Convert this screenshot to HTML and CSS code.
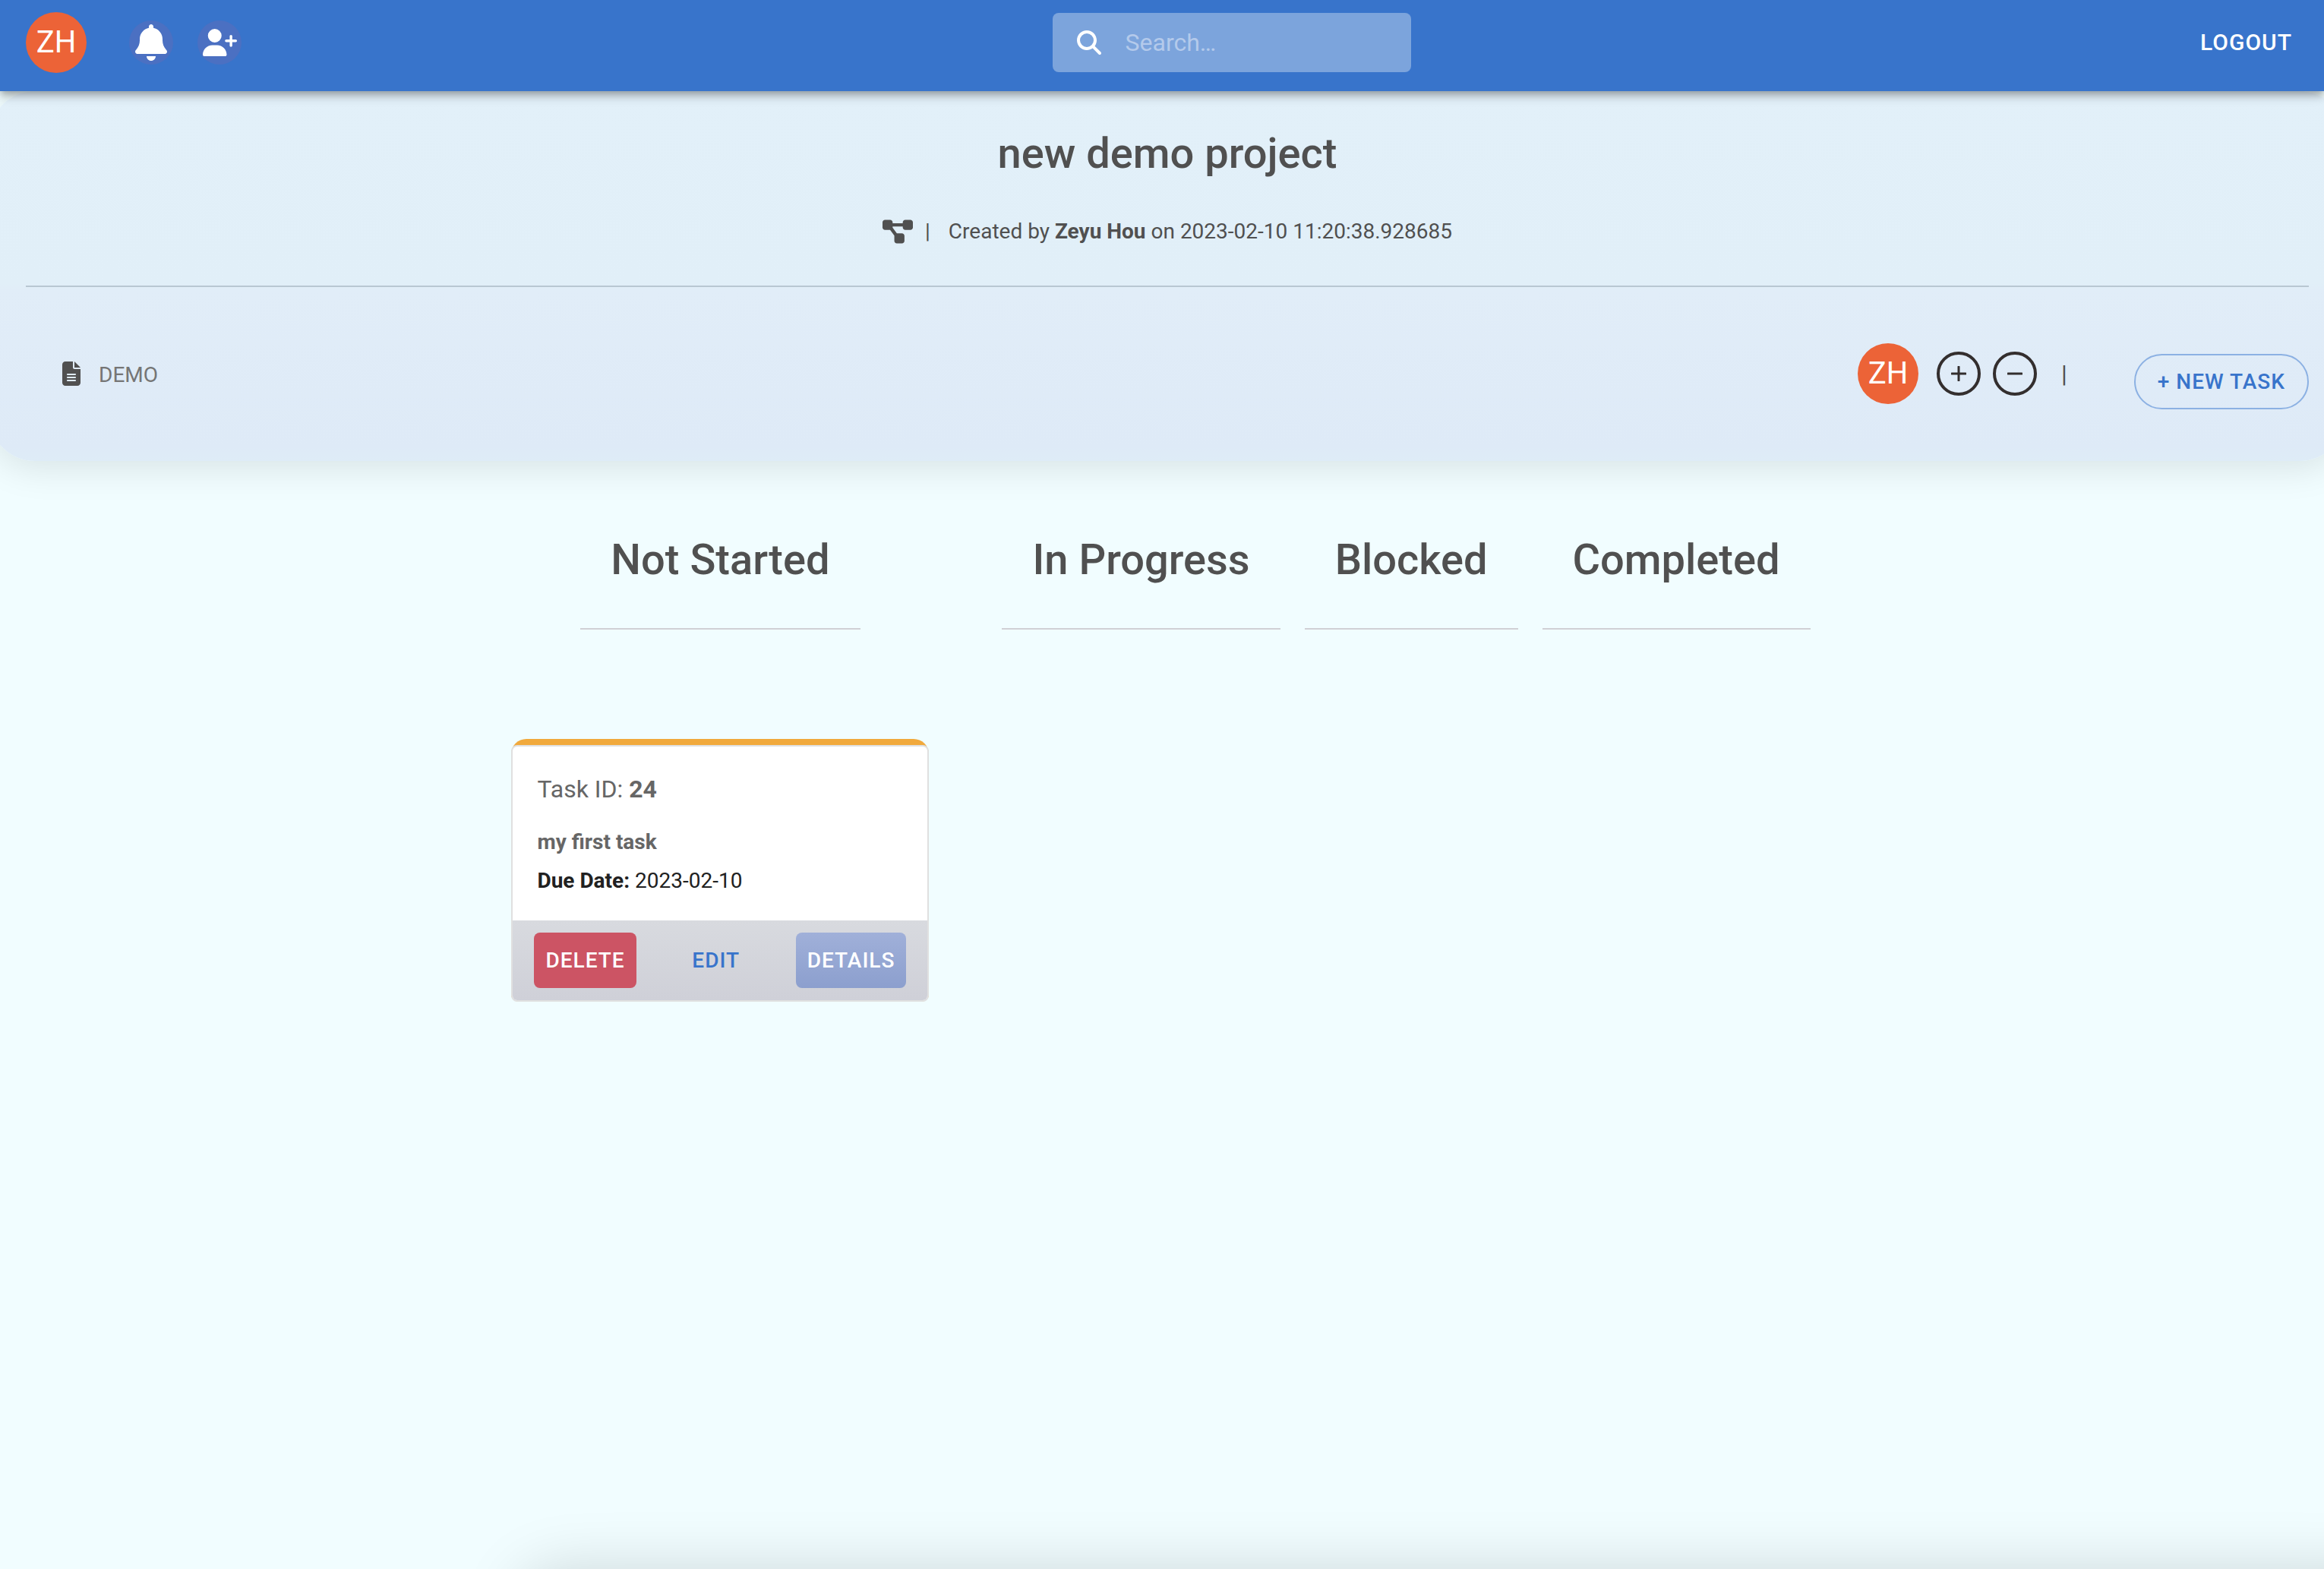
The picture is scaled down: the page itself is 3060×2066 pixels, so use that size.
FILE: index.html
```html
<!DOCTYPE html>
<html lang="en">
<head>
<meta charset="utf-8">
<meta name="viewport" content="width=device-width, initial-scale=1">
<title>new demo project</title>
<link rel="stylesheet" href="styles.css">
</head>
<body>
<div class="page">
  <header class="topbar">
    <div class="topbar-start">
      <span class="avatar">ZH</span>
      <button class="icon-button" type="button" aria-label="Notifications">
        <svg class="icon-bell" viewBox="0 0 448 512" aria-hidden="true"><path d="M224 0c-17.7 0-32 14.3-32 32V51.200C119 66 64 130.600 64 208v18.800c0 47-17.300 92.400-48.500 127.600l-7.400 8.300c-8.400 9.400-10.400 22.900-5.300 34.400S19.400 416 32 416H416c12.600 0 24-7.400 29.200-18.900s3.100-25-5.300-34.400l-7.400-8.300C401.300 319.200 384 273.900 384 226.800V208c0-77.400-55-142-128-156.800V32c0-17.700-14.300-32-32-32zm45.300 493.300c12-12 18.700-28.300 18.700-45.300H224 160c0 17 6.700 33.300 18.700 45.300s28.300 18.700 45.300 18.700s33.300-6.700 45.300-18.700z"/></svg>
      </button>
      <button class="icon-button" type="button" aria-label="Add user">
        <svg class="icon-user" viewBox="0 0 640 512" aria-hidden="true"><path d="M96 128a128 128 0 1 1 256 0A128 128 0 1 1 96 128zM0 482.300C0 383.800 79.800 304 178.300 304h91.400C368.200 304 448 383.800 448 482.300c0 16.400-13.300 29.700-29.700 29.700H29.700C13.300 512 0 498.700 0 482.300zM504 312V248H440c-13.300 0-24-10.700-24-24s10.700-24 24-24h64V136c0-13.300 10.700-24 24-24s24 10.700 24 24v64h64c13.300 0 24 10.700 24 24s-10.700 24-24 24H552v64c0 13.300-10.700 24-24 24s-24-10.700-24-24z"/></svg>
      </button>
    </div>
    <label class="search">
      <svg class="icon-search" viewBox="0 0 512 512" aria-hidden="true"><path d="M416 208c0 45.900-14.900 88.300-40 122.700L502.600 457.400c12.500 12.500 12.500 32.800 0 45.300s-32.800 12.500-45.300 0L330.700 376c-34.400 25.200-76.800 40-122.700 40C93.100 416 0 322.900 0 208S93.100 0 208 0S416 93.100 416 208zM208 352a144 144 0 1 0 0-288 144 144 0 1 0 0 288z"/></svg>
      <input class="search-input" type="text" placeholder="Search…" aria-label="Search">
    </label>
    <div class="topbar-end">
      <button class="button logout" type="button">LOGOUT</button>
    </div>
  </header>

  <section class="project">
    <h1 class="heading">new demo project</h1>
    <p class="created">
      <svg class="icon-project" viewBox="0 0 576 512" aria-hidden="true"><path d="M0 80C0 53.500 21.500 32 48 32h96c26.500 0 48 21.500 48 48V96H384V80c0-26.500 21.500-48 48-48h96c26.500 0 48 21.500 48 48v96c0 26.500-21.500 48-48 48H432c-26.500 0-48-21.500-48-48V160H192v16c0 1.700-.1 3.400-.3 5L272 288h96c26.500 0 48 21.500 48 48v96c0 26.500-21.500 48-48 48H272c-26.500 0-48-21.500-48-48V336c0-1.700 .1-3.400 .3-5L144 224H48c-26.500 0-48-21.500-48-48V80z"/></svg>
      <span class="created-bar">|</span>
      <span>Created by <strong>Zeyu Hou</strong> on 2023-02-10 11:20:38.928685</span>
    </p>
    <hr class="divider">
    <div class="project-row">
      <div class="project-tag">
        <svg class="icon-file" viewBox="0 0 384 512" aria-hidden="true"><path d="M64 0C28.700 0 0 28.700 0 64V448c0 35.300 28.700 64 64 64H320c35.300 0 64-28.700 64-64V160H256c-17.700 0-32-14.300-32-32V0H64zM256 0V128H384L256 0zM112 256H272c8.800 0 16 7.200 16 16s-7.200 16-16 16H112c-8.800 0-16-7.200-16-16s7.200-16 16-16zm0 64H272c8.800 0 16 7.200 16 16s-7.200 16-16 16H112c-8.800 0-16-7.200-16-16s7.200-16 16-16zm0 64H272c8.800 0 16 7.200 16 16s-7.200 16-16 16H112c-8.800 0-16-7.200-16-16s7.200-16 16-16z"/></svg>
        <span>DEMO</span>
      </div>
      <div class="members">
        <span class="avatar members-avatar">ZH</span>
        <button class="round-button" type="button" aria-label="Add member"><svg class="icon-sign" viewBox="0 0 20 20" aria-hidden="true"><path d="M1 10H19M10 1V19"/></svg></button>
        <button class="round-button" type="button" aria-label="Remove member"><svg class="icon-sign" viewBox="0 0 20 20" aria-hidden="true"><path d="M1 10H19"/></svg></button>
        <span class="members-bar">|</span>
        <button class="button new-task" type="button">+ NEW TASK</button>
      </div>
    </div>
  </section>

  <main class="board">
    <section class="column column-filled">
      <h2 class="heading column-title">Not Started</h2>
      <article class="card">
        <div class="card-inner">
          <div class="card-body">
            <p class="card-id">Task ID: <strong>24</strong></p>
            <p class="card-name">my first task</p>
            <p class="card-due"><strong>Due Date:</strong> 2023-02-10</p>
          </div>
          <div class="card-actions">
            <button class="button delete" type="button">DELETE</button>
            <button class="button edit" type="button">EDIT</button>
            <button class="button details" type="button">DETAILS</button>
          </div>
        </div>
      </article>
    </section>
    <section class="column"><h2 class="heading column-title">In Progress</h2></section>
    <section class="column"><h2 class="heading column-title">Blocked</h2></section>
    <section class="column"><h2 class="heading column-title">Completed</h2></section>
  </main>
</div>
</body>
</html>
```
FILE: styles.css
```css
* {
  box-sizing: border-box;
}

body {
  margin: 0;
  background: #f1fdff;
  color: #505050;
  font-family: Roboto, "Liberation Sans", sans-serif;
  font-size: 28px;
  line-height: 40px;
}

p,
h1,
h2 {
  margin: 0;
}

svg {
  display: block;
  fill: currentColor;
}

.page {
  position: relative;
  min-height: 100vh;
  overflow: hidden;
}

/* Shadow of the drawer parked under the lower edge of the window */
.page::after {
  content: "";
  position: absolute;
  top: 100%;
  left: 680px;
  right: -100px;
  height: 120px;
  border-radius: 60px;
  box-shadow: 0 0 80px rgba(0, 0, 0, 0.15);
}

.heading {
  font-size: 56px;
  font-weight: 500;
  line-height: 64px;
}

.button {
  border: 0;
  border-radius: 8px;
  padding: 0 15px;
  height: 73px;
  background: none;
  color: #fff;
  font: inherit;
  font-weight: 500;
  letter-spacing: 1px;
  white-space: nowrap;
}

.avatar {
  display: flex;
  align-items: center;
  justify-content: center;
  width: 80px;
  height: 80px;
  border-radius: 50%;
  background: #ec6337;
  color: #fff;
  font-size: 40px;
}

/* Top bar */
.topbar {
  position: relative;
  z-index: 1;
  display: grid;
  grid-template-columns: 1fr 472px 1fr;
  column-gap: 24px;
  align-items: center;
  height: 120px;
  padding: 0 27px 8px 34px;
  background: #3874cb;
  box-shadow: 0 4px 8px -2px rgba(0, 0, 0, 0.2), 0 8px 10px rgba(0, 0, 0, 0.14), 0 2px 20px rgba(0, 0, 0, 0.12);
}

.topbar-start {
  display: flex;
  align-items: center;
  gap: 32px;
}

.topbar-start .avatar {
  margin-right: 24px;
}

.topbar-end {
  display: flex;
  justify-content: flex-end;
}

.icon-button {
  display: flex;
  align-items: center;
  justify-content: center;
  width: 58px;
  height: 58px;
  padding: 0;
  border: 0;
  border-radius: 50%;
  background: #4b70c2;
  color: #fff;
}

.icon-bell {
  width: 42px;
  height: 48px;
}

.icon-user {
  width: 45px;
  height: 36px;
  flex: none;
}

.search {
  display: flex;
  align-items: center;
  gap: 32px;
  height: 78px;
  margin-left: 88px;
  margin-right: -88px;
  padding: 0 32px;
  border-radius: 8px;
  background: #7ca4dc;
  color: #fff;
}

.icon-search {
  width: 32px;
  height: 32px;
  flex: none;
}

.search-input {
  flex: 1;
  min-width: 0;
  padding: 0;
  border: 0;
  outline: 0;
  background: none;
  color: #fff;
  font: inherit;
  font-size: 32px;
}

.search-input::placeholder {
  color: #b4caeb;
  opacity: 1;
}

.logout {
  font-size: 30px;
}

/* Project header */
.project {
  margin: 0 -28px 0 -14px;
  padding: 50px 48px 75px;
  border-radius: 60px;
  background: linear-gradient(#e2f0f9, #e1eff8 52%, #e1edf8 54%, #deeaf7 96%, #deecf7);
  box-shadow: 0 10px 48px rgba(0, 0, 0, 0.1);
}

.project .heading {
  text-align: center;
}

.created {
  display: flex;
  align-items: center;
  justify-content: center;
  margin-top: 51px;
}

.icon-project {
  width: 40px;
  height: 36px;
}

.created-bar {
  margin: 0 24px 0 16px;
}

.divider {
  height: 2px;
  margin: 51px 0 74px;
  border: 0;
  background: #b8c7d2;
}

.project-row {
  display: flex;
  align-items: center;
  justify-content: space-between;
  height: 80px;
}

.project-tag {
  display: flex;
  align-items: center;
  gap: 24px;
  padding-left: 48px;
  color: #757575;
}

.project-tag span {
  padding-top: 3px;
}

.icon-file {
  width: 24px;
  height: 32px;
  color: #505050;
}

.members {
  display: flex;
  align-items: center;
  gap: 16px;
  height: 80px;
}

.members-avatar {
  margin-right: 8px;
}

.round-button {
  display: flex;
  align-items: center;
  justify-content: center;
  width: 58px;
  height: 58px;
  padding: 0;
  border: 4px solid #332e2e;
  border-radius: 50%;
  background: none;
  color: #332e2e;
}

.icon-sign {
  width: 20px;
  height: 20px;
  fill: none;
  stroke: currentColor;
  stroke-width: 3;
  stroke-linecap: round;
}

.members-bar {
  margin: 0 72px 0 16px;
  font-size: 32px;
}

.new-task {
  margin-top: 21px;
  padding: 0 29px;
  border: 2px solid #8cb1e3;
  border-radius: 40px;
  color: #3874cb;
}

/* Board */
.board {
  display: flex;
  justify-content: center;
  gap: 32px;
  padding: 98px 3px 0 0;
}

.column {
  display: flex;
  flex-direction: column;
  align-items: center;
}

.column-filled {
  margin-right: 64px;
}

.column-title {
  padding: 0 40px 58px;
  border-bottom: 2px solid #d0d0d5;
}

.card {
  width: 550px;
  margin-top: 144px;
  padding-top: 8px;
  border-radius: 20px 20px 10px 10px;
  background: #f1a93c;
}

.card-inner {
  border: 2px solid #e0e0e0;
  border-radius: 8px;
  background: #fff;
  overflow: hidden;
}

.card-body {
  padding: 32px 32px 32px;
}

.card-id {
  margin-bottom: 26px;
  color: #666;
  font-size: 32px;
  line-height: 48px;
}

.card-name {
  margin-bottom: 11px;
  color: #666;
  font-weight: 700;
}

.card-due {
  color: #212121;
}

.card-actions {
  display: flex;
  justify-content: space-between;
  padding: 16px 28px;
  background: linear-gradient(#d8dadf, #cfd0d8);
}

.delete {
  background: #cc5464;
}

.edit {
  color: #3874cb;
}

.details {
  background: linear-gradient(#a0b0d9, #8c9fce);
}
```
